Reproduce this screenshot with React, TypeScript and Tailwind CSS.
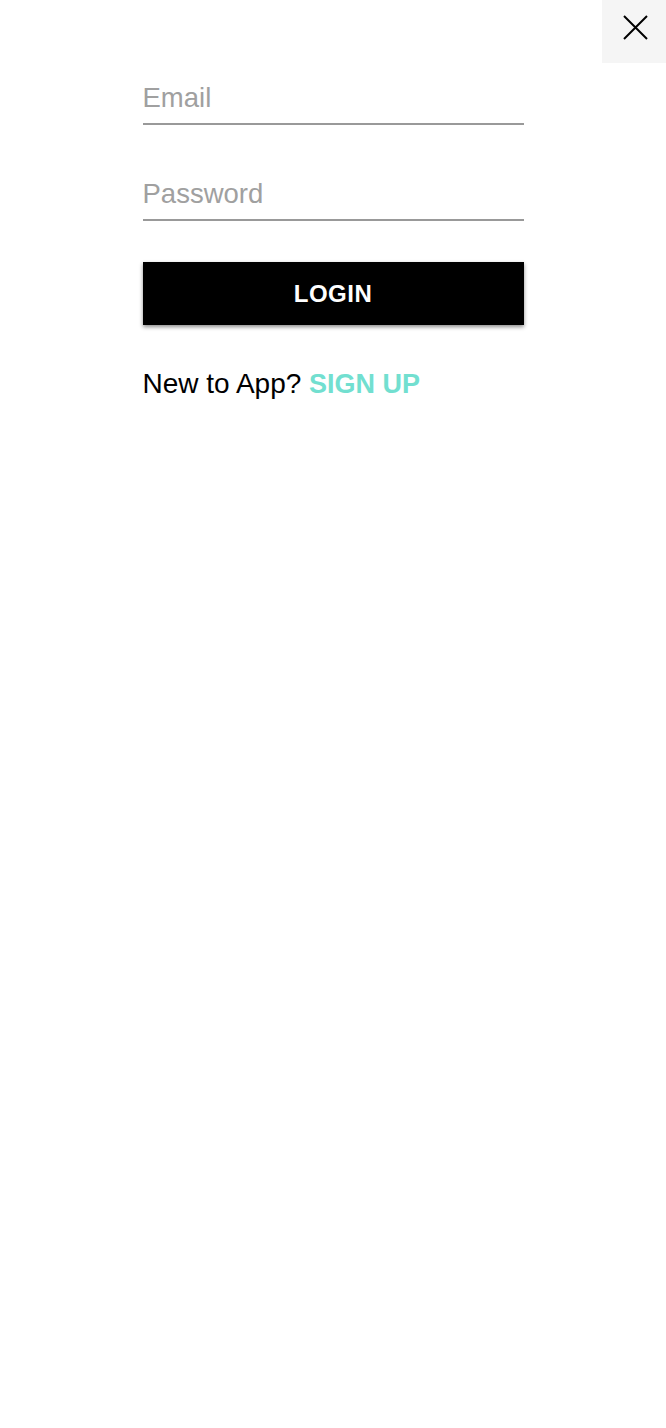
import { useState } from "react";

function CloseIcon() {
  return (
    <svg width="25" height="25" viewBox="0 0 25 25" fill="none">
      <path d="M1 1 L24 24 M24 1 L1 24" stroke="#000" strokeWidth="2" />
    </svg>
  );
}

function App() {
  const [email, setEmail] = useState<string>("");
  const [password, setPassword] = useState<string>("");

  return (
    <div
      className="w-full min-h-[1428px] bg-white"
      style={{ fontFamily: '"Liberation Sans", Arial, sans-serif' }}
    >
      {/* 닫기 버튼 */}
      <div className="flex justify-end">
        <button className="w-[64px] h-[63px] bg-[#f5f5f5] flex items-start pt-[15px] pl-[21px]">
          <CloseIcon />
        </button>
      </div>

      {/* 로그인 폼 */}
      <div className="w-[381px] mx-auto mt-[19px] flex flex-col">
        <input
          type="email"
          value={email}
          onChange={(e) => setEmail(e.target.value)}
          placeholder="Email"
          className="block w-full text-[27.5px] leading-[32px] pb-[9px] border-b-2 border-[#999999] outline-none placeholder:text-[#a0a0a0] text-black"
        />
        <input
          type="password"
          value={password}
          onChange={(e) => setPassword(e.target.value)}
          placeholder="Password"
          className="block w-full mt-[53px] text-[27.5px] leading-[32px] pb-[9px] border-b-2 border-[#999999] outline-none placeholder:text-[#a0a0a0] text-black"
        />
        <button className="mt-[41px] h-[63px] w-full bg-black text-white text-[24px] font-bold tracking-[0.5px] shadow-[0_2px_4px_rgba(0,0,0,0.45)]">
          LOGIN
        </button>
        <p className="mt-[43px] text-[28px] leading-[32px] text-black">
          New to App?{" "}
          <span className="font-bold text-[27px] text-[#72dfd0]">SIGN UP</span>
        </p>
      </div>
    </div>
  );
}

export default App;
